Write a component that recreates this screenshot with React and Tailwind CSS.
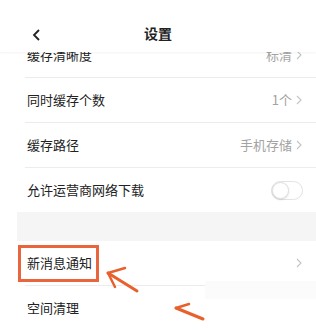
import React from "react";

const font = { fontFamily: '"Noto Sans CJK SC", "Noto Sans", sans-serif' };

function Chevron() {
  return (
    <svg width="6" height="10" viewBox="0 0 6 10" className="ml-[4px] shrink-0">
      <polyline points="1,1 5,5 1,9" fill="none" stroke="#c4c4c4" strokeWidth="1.1" />
    </svg>
  );
}

function Row({ label, value, chevron = true, toggle = false, divider = true, boxed = false }) {
  return (
    <div className="bg-white">
      <div className="flex h-[44px] items-center pl-[27px] pr-[14px]">
        <span
          className={`text-[13px] text-[#222] ${
            boxed ? "-ml-[9px] flex h-[37px] items-center border-[3px] border-[#e8653d] pl-[6px] pr-[4px]" : ""
          }`}
        >
          {label}
        </span>
        <div className="ml-auto flex items-center">
          {value && <span className="text-[13px] text-[#a3a3a3]">{value}</span>}
          {chevron && <Chevron />}
          {toggle && (
            <div className="mr-[-1px] flex h-[19px] w-[32px] items-center rounded-full border border-[#e3e3e3] bg-white">
              <div className="h-[17px] w-[17px] rounded-full border border-[#dedede] bg-white shadow-[0_1px_2px_rgba(0,0,0,0.12)]" />
            </div>
          )}
        </div>
      </div>
      {divider && <div className="ml-[25px] h-px bg-[#ececec]" />}
    </div>
  );
}

export default function App() {
  return (
    <div className="relative h-[330px] w-[316px] overflow-hidden bg-white" style={font}>
      <header className="relative z-10 h-[52px] bg-white shadow-[0_1px_2px_rgba(0,0,0,0.05)]">
        <svg width="9" height="12" viewBox="0 0 9 12" className="absolute left-[32px] top-[29px]">
          <polyline points="7,1 2,6 7,11" fill="none" stroke="#222" strokeWidth="1.8" />
        </svg>
        <h1 className="absolute left-1/2 top-[23px] -translate-x-1/2 text-[14px] font-bold leading-[20px] text-[#222]">设置</h1>
      </header>

      <div className="-mt-[19px]">
        <Row label="缓存清晰度" value="标清" />
        <Row label="同时缓存个数" value="1个" />
        <Row label="缓存路径" value="手机存储" />
        <Row label="允许运营商网络下载" chevron={false} toggle divider={false} />
        <div className="ml-[17px] h-[29px] bg-[#f5f5f5]" />
        <Row label="新消息通知" boxed />
        <Row label="空间清理" chevron={false} divider={false} />
      </div>

      <div className="absolute left-[205px] top-[281px] h-[18px] w-[111px] bg-[#fbfbfb]" />

      <svg className="pointer-events-none absolute left-0 top-0" width="316" height="330">
        <g stroke="#e8602c" strokeLinecap="round" fill="none">
          <line x1="108" y1="273" x2="137" y2="291" strokeWidth="3" />
          <line x1="108" y1="273" x2="125" y2="268" strokeWidth="2.5" />
          <line x1="108" y1="273" x2="115" y2="287" strokeWidth="2.5" />
          <line x1="176" y1="308" x2="203" y2="319" strokeWidth="3" />
          <line x1="176" y1="308" x2="189" y2="304" strokeWidth="2.5" />
        </g>
      </svg>
    </div>
  );
}
